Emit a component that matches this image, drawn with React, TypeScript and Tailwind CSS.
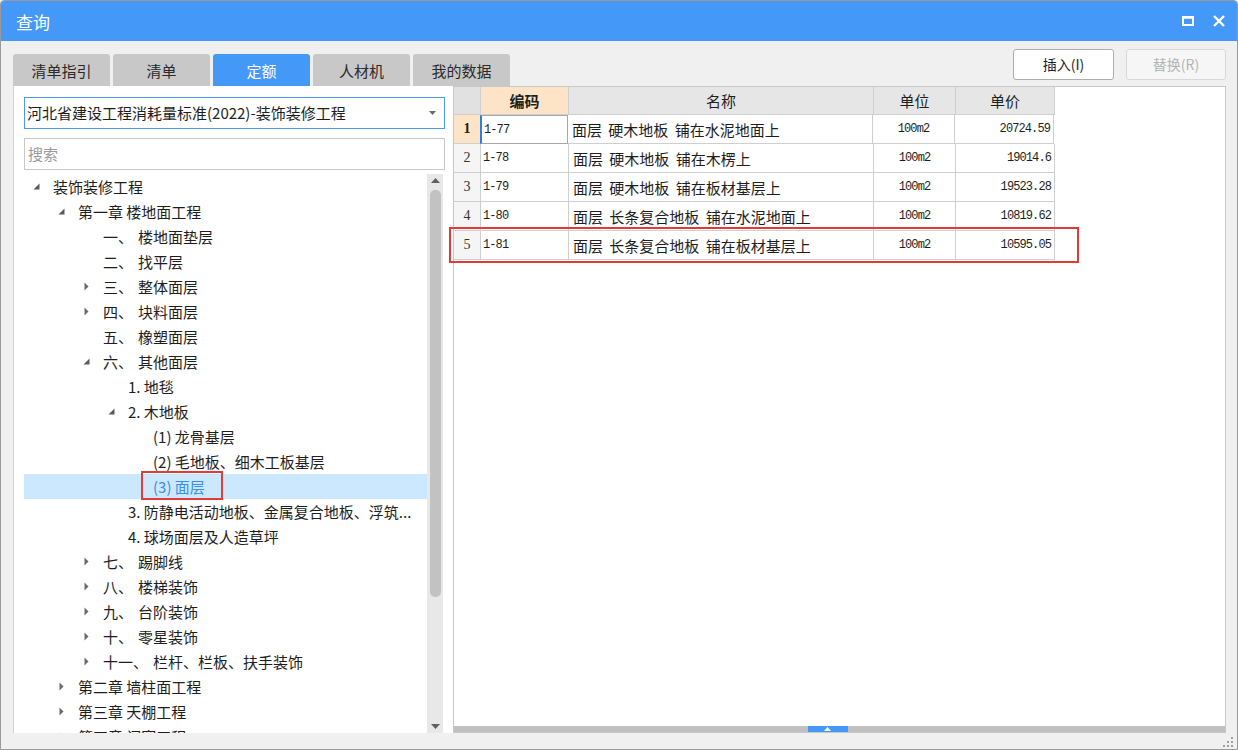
import React from "react"

type Node = {
  level: number
  label: string
  num?: string
  state?: "open" | "closed"
  selected?: boolean
}

const treeRows: Node[] = [
  { level: 0, label: "装饰装修工程", state: "open" },
  { level: 1, label: "第一章 楼地面工程", state: "open" },
  { level: 2, num: "一", label: "楼地面垫层" },
  { level: 2, num: "二", label: "找平层" },
  { level: 2, num: "三", label: "整体面层", state: "closed" },
  { level: 2, num: "四", label: "块料面层", state: "closed" },
  { level: 2, num: "五", label: "橡塑面层" },
  { level: 2, num: "六", label: "其他面层", state: "open" },
  { level: 3, label: "1. 地毯" },
  { level: 3, label: "2. 木地板", state: "open" },
  { level: 4, label: "(1) 龙骨基层" },
  { level: 4, label: "(2) 毛地板、细木工板基层" },
  { level: 4, label: "(3) 面层", selected: true },
  { level: 3, label: "3. 防静电活动地板、金属复合地板、浮筑..." },
  { level: 3, label: "4. 球场面层及人造草坪" },
  { level: 2, num: "七", label: "踢脚线", state: "closed" },
  { level: 2, num: "八", label: "楼梯装饰", state: "closed" },
  { level: 2, num: "九", label: "台阶装饰", state: "closed" },
  { level: 2, num: "十", label: "零星装饰", state: "closed" },
  { level: 2, num: "十一", label: "栏杆、栏板、扶手装饰", state: "closed" },
  { level: 1, label: "第二章 墙柱面工程", state: "closed" },
  { level: 1, label: "第三章 天棚工程", state: "closed" },
  { level: 1, label: "第四章 门窗工程", state: "closed" },
]

const gridRows = [
  { no: "1", code: "1-77", name: "面层 硬木地板 铺在水泥地面上", unit: "100m2", price: "20724.59" },
  { no: "2", code: "1-78", name: "面层 硬木地板 铺在木楞上", unit: "100m2", price: "19014.6" },
  { no: "3", code: "1-79", name: "面层 硬木地板 铺在板材基层上", unit: "100m2", price: "19523.28" },
  { no: "4", code: "1-80", name: "面层 长条复合地板 铺在水泥地面上", unit: "100m2", price: "10819.62" },
  { no: "5", code: "1-81", name: "面层 长条复合地板 铺在板材基层上", unit: "100m2", price: "10595.05" },
]

const tabs = ["清单指引", "清单", "定额", "人材机", "我的数据"]

// 树的展开/折叠三角
const Arrow = ({ state }: { state?: "open" | "closed" }) => {
  if (state === "open")
    return (
      <svg width="7" height="7" viewBox="0 0 7 7">
        <polygon points="6.5,0.5 6.5,6.5 0.5,6.5" fill="#5a5a5a" />
      </svg>
    )
  if (state === "closed")
    return (
      <svg width="5" height="9" viewBox="0 0 5 9">
        <polygon points="0.5,0.5 4.5,4.5 0.5,8.5" fill="#6a6a6a" />
      </svg>
    )
  return null
}

const TreeRow = ({ node }: { node: Node }) => {
  const indent = ["pl-0", "pl-[25px]", "pl-[50px]", "pl-[75px]", "pl-[100px]"][node.level]
  return (
    <div
      className={`relative flex items-center h-[25px] shrink-0 ${indent} ${
        node.selected ? "bg-[#cce8ff] text-[#3a8ee6]" : "text-[#1e1e1e]"
      }`}
    >
      <div className="w-[24px] flex justify-center items-center">
        <Arrow state={node.state} />
      </div>
      <div className="ml-[5px] whitespace-nowrap flex">
        {node.num ? (
          <>
            <span>{node.num}、</span>
            <span className="ml-[5px]">{node.label}</span>
          </>
        ) : (
          <span>{node.label}</span>
        )}
      </div>
      {node.selected && (
        <div className="absolute left-[117px] top-[-3px] w-[82px] h-[29px] border-2 border-[#e53935]" />
      )}
    </div>
  )
}

const mono = "font-['Liberation_Mono',monospace] text-[12px] tracking-[-0.9px]"

export default function App() {
  return (
    <div className="w-[1238px] h-[750px] flex flex-col bg-[#f0f0f0] border border-[#9a9a9a] rounded-t-[4px] overflow-hidden font-['Noto_Sans_CJK_SC',sans-serif]">
      {/* Title bar */}
      <div className="h-[40px] shrink-0 bg-[#4498f8] flex items-center pl-[15px] pr-[10px]">
        <span className="text-white text-[17px] leading-none">查询</span>
        <div className="ml-auto flex items-center gap-[19px]">
          <svg width="12" height="10" viewBox="0 0 12 10">
            <rect x="1" y="1.5" width="10" height="7.5" fill="none" stroke="white" strokeWidth="2" />
            <rect x="0" y="0" width="12" height="2.5" fill="white" />
          </svg>
          <svg width="12" height="12" viewBox="0 0 12 12" className="mr-[2px]">
            <path d="M1 1 L11 11 M11 1 L1 11" stroke="white" strokeWidth="2.4" />
          </svg>
        </div>
      </div>

      {/* Tabs + buttons */}
      <div className="h-[45px] shrink-0 flex pl-[12px] pr-[11px]">
        <div className="flex items-end gap-[3px]">
          {tabs.map((t) => (
            <div
              key={t}
              className={`w-[97px] h-[32px] rounded-t-[3px] flex items-center justify-center text-[15px] leading-none ${
                t === "定额" ? "bg-[#4498f8] text-white" : "bg-[#c8c8c8] text-[#2a2a2a]"
              }`}
            >
              {t}
            </div>
          ))}
        </div>
        <div className="ml-auto flex gap-[12px] pt-[8px]">
          <div className="w-[101px] h-[31px] bg-white border border-[#adadad] rounded-[3px] flex items-center justify-center text-[14px] text-[#1e1e1e]">
            插入(I)
          </div>
          <div className="w-[100px] h-[31px] bg-[#f6f6f6] border border-[#d8d8d8] rounded-[3px] flex items-center justify-center text-[14px] text-[#b4b4b4]">
            替换(R)
          </div>
        </div>
      </div>

      {/* Main area */}
      <div className="flex-1 min-h-0 flex pl-[12px] pr-[11px]">
        {/* Left panel */}
        <div className="w-[440px] bg-white border-l border-[#d0d0d0] flex flex-col pt-[11px] pl-[10px] pr-[8px]">
          <div className="h-[32px] shrink-0 border border-[#4a9bf0] flex items-center pl-[2px] pr-[8px] text-[15px] text-[#1e1e1e]">
            <span className="whitespace-nowrap">河北省建设工程消耗量标准(2022)-装饰装修工程</span>
            <svg width="7" height="4" viewBox="0 0 7 4" className="ml-auto">
              <polygon points="0,0 7,0 3.5,4" fill="#6a6a6a" />
            </svg>
          </div>
          <div className="h-[32px] shrink-0 mt-[9px] border border-[#c8c8c8] flex items-center pl-[3px] text-[15px] text-[#9a9a9a]">
            搜索
          </div>
          <div className="flex-1 min-h-0 flex mt-[4px]">
            <div className="w-[403px] overflow-hidden flex flex-col text-[15px] leading-none">
              {treeRows.map((n, i) => (
                <TreeRow key={i} node={n} />
              ))}
            </div>
            {/* vertical scrollbar */}
            <div className="w-[16px] bg-[#e8e8e8] flex flex-col items-center pt-[4px] pb-[4px]">
              <svg width="9" height="5" viewBox="0 0 9 5">
                <polygon points="4.5,0 9,5 0,5" fill="#606060" />
              </svg>
              <div className="w-[11px] h-[407px] mt-[7px] rounded-[5px] bg-[#c2c2c2]" />
              <svg width="9" height="5" viewBox="0 0 9 5" className="mt-auto">
                <polygon points="0,0 9,0 4.5,5" fill="#606060" />
              </svg>
            </div>
          </div>
        </div>

        {/* Right panel */}
        <div className="relative flex-1 bg-white border border-[#c8c8c8] flex flex-col">
          <div className="flex-1 min-h-0">
            <div className="w-[601px] flex flex-col text-[15px] text-[#1e1e1e] leading-none">
              {/* header */}
              <div className="flex h-[28px]">
                <div className="w-[27px] bg-[#e1e1e1] border-r border-b border-[#cfcfcf]" />
                <div className="w-[88px] bg-[#fde4c6] border-r border-b border-[#cfcfcf] flex items-center justify-center font-bold">
                  编码
                </div>
                <div className="w-[305px] bg-[#e6e6e6] border-r border-b border-[#cfcfcf] flex items-center justify-center">
                  名称
                </div>
                <div className="w-[82px] bg-[#e6e6e6] border-r border-b border-[#cfcfcf] flex items-center justify-center">
                  单位
                </div>
                <div className="w-[99px] bg-[#e6e6e6] border-r border-b border-[#cfcfcf] flex items-center justify-center">
                  单价
                </div>
              </div>
              {gridRows.map((r, i) => (
                <div key={r.no} className="flex h-[29px]">
                  <div
                    className={`w-[27px] border-r border-b border-[#cfcfcf] flex items-center justify-center font-['Liberation_Serif',serif] text-[14px] ${
                      i === 0 ? "bg-[#fde4c6] font-bold" : "bg-[#f5f5f5] text-[#333]"
                    }`}
                  >
                    {r.no}
                  </div>
                  <div
                    className={`w-[88px] border-b border-r flex items-center pl-[2px] ${mono} ${
                      i === 0 ? "border-[#a8a8a8] border-t border-l-2 border-l-[#2f7de1] -ml-px" : "border-[#cfcfcf]"
                    }`}
                  >
                    {r.code}
                  </div>
                  <div className="w-[305px] border-r border-b border-[#cfcfcf] flex items-center pl-[4px] whitespace-pre [word-spacing:3px]">
                    {r.name}
                  </div>
                  <div className={`w-[82px] border-r border-b border-[#cfcfcf] flex items-center justify-center ${mono}`}>
                    {r.unit}
                  </div>
                  <div className={`w-[99px] border-r border-b border-[#cfcfcf] flex items-center justify-end pr-[3px] ${mono}`}>
                    {r.price}
                  </div>
                </div>
              ))}
            </div>
          </div>
          {/* bottom splitter */}
          <div className="h-[6px] shrink-0 bg-[#c0c0c0] flex justify-center pr-[24px]">
            <div className="w-[40px] h-[6px] bg-[#4498f8] flex items-center justify-center">
              <svg width="7" height="4" viewBox="0 0 7 4">
                <polygon points="3.5,0 7,4 0,4" fill="white" />
              </svg>
            </div>
          </div>
          {/* highlight box around row 5 */}
          <div className="absolute left-[-5px] top-[140px] w-[630px] h-[36px] border-2 border-[#e53935]" />
        </div>
      </div>

      {/* status strip */}
      <div className="h-[16px] shrink-0 flex justify-end items-end pr-[3px] pb-[1px]">
        <svg width="12" height="12" viewBox="0 0 12 12">
          <rect x="9" y="1" width="2" height="2" fill="#a0a0a0" />
          <rect x="5" y="5" width="2" height="2" fill="#a0a0a0" />
          <rect x="9" y="5" width="2" height="2" fill="#a0a0a0" />
          <rect x="1" y="9" width="2" height="2" fill="#a0a0a0" />
          <rect x="5" y="9" width="2" height="2" fill="#a0a0a0" />
          <rect x="9" y="9" width="2" height="2" fill="#a0a0a0" />
        </svg>
      </div>
    </div>
  )
}
